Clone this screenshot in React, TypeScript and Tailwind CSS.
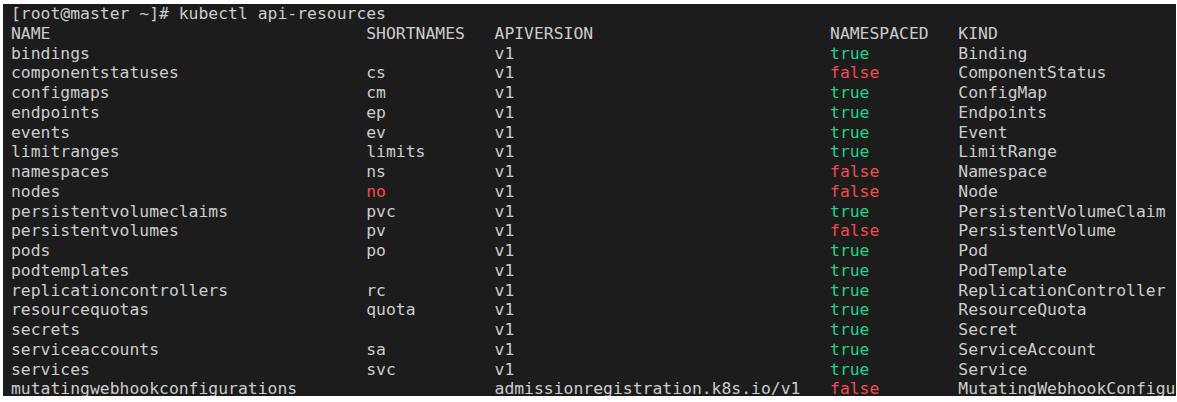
type Row = {
  name: string;
  short?: string;
  shortRed?: boolean;
  api: string;
  ns: boolean;
  kind: string;
};

const rows: Row[] = [
  { name: "bindings", api: "v1", ns: true, kind: "Binding" },
  { name: "componentstatuses", short: "cs", api: "v1", ns: false, kind: "ComponentStatus" },
  { name: "configmaps", short: "cm", api: "v1", ns: true, kind: "ConfigMap" },
  { name: "endpoints", short: "ep", api: "v1", ns: true, kind: "Endpoints" },
  { name: "events", short: "ev", api: "v1", ns: true, kind: "Event" },
  { name: "limitranges", short: "limits", api: "v1", ns: true, kind: "LimitRange" },
  { name: "namespaces", short: "ns", api: "v1", ns: false, kind: "Namespace" },
  { name: "nodes", short: "no", shortRed: true, api: "v1", ns: false, kind: "Node" },
  { name: "persistentvolumeclaims", short: "pvc", api: "v1", ns: true, kind: "PersistentVolumeClaim" },
  { name: "persistentvolumes", short: "pv", api: "v1", ns: false, kind: "PersistentVolume" },
  { name: "pods", short: "po", api: "v1", ns: true, kind: "Pod" },
  { name: "podtemplates", api: "v1", ns: true, kind: "PodTemplate" },
  { name: "replicationcontrollers", short: "rc", api: "v1", ns: true, kind: "ReplicationController" },
  { name: "resourcequotas", short: "quota", api: "v1", ns: true, kind: "ResourceQuota" },
  { name: "secrets", api: "v1", ns: true, kind: "Secret" },
  { name: "serviceaccounts", short: "sa", api: "v1", ns: true, kind: "ServiceAccount" },
  { name: "services", short: "svc", api: "v1", ns: true, kind: "Service" },
  {
    name: "mutatingwebhookconfigurations",
    api: "admissionregistration.k8s.io/v1",
    ns: false,
    kind: "MutatingWebhookConfiguration",
  },
];

const cols = "grid grid-cols-[36ch_13ch_34ch_13ch_1fr]";

export default function App() {
  return (
    <div className="w-[1177px] h-[402px] bg-white pt-[4px] pl-[3px] pr-[1px] pb-[6px]">
      <div
        className="h-full overflow-hidden bg-[#1c1c1c] pl-[8px] text-[16.4px] leading-[19.75px] text-[#cccccc] whitespace-pre"
        style={{ fontFamily: '"DejaVu Sans Mono", monospace' }}
      >
        <div>[root@master ~]# kubectl api-resources</div>
        <div className={cols}>
          <span>NAME</span>
          <span>SHORTNAMES</span>
          <span>APIVERSION</span>
          <span>NAMESPACED</span>
          <span>KIND</span>
        </div>
        {rows.map((r) => (
          <div key={r.name} className={cols}>
            <span>{r.name}</span>
            <span className={r.shortRed ? "text-[#f14c4c]" : ""}>{r.short ?? ""}</span>
            <span>{r.api}</span>
            <span className={r.ns ? "text-[#23d18b]" : "text-[#f14c4c]"}>
              {r.ns ? "true" : "false"}
            </span>
            <span className="overflow-hidden">{r.kind}</span>
          </div>
        ))}
      </div>
    </div>
  );
}
